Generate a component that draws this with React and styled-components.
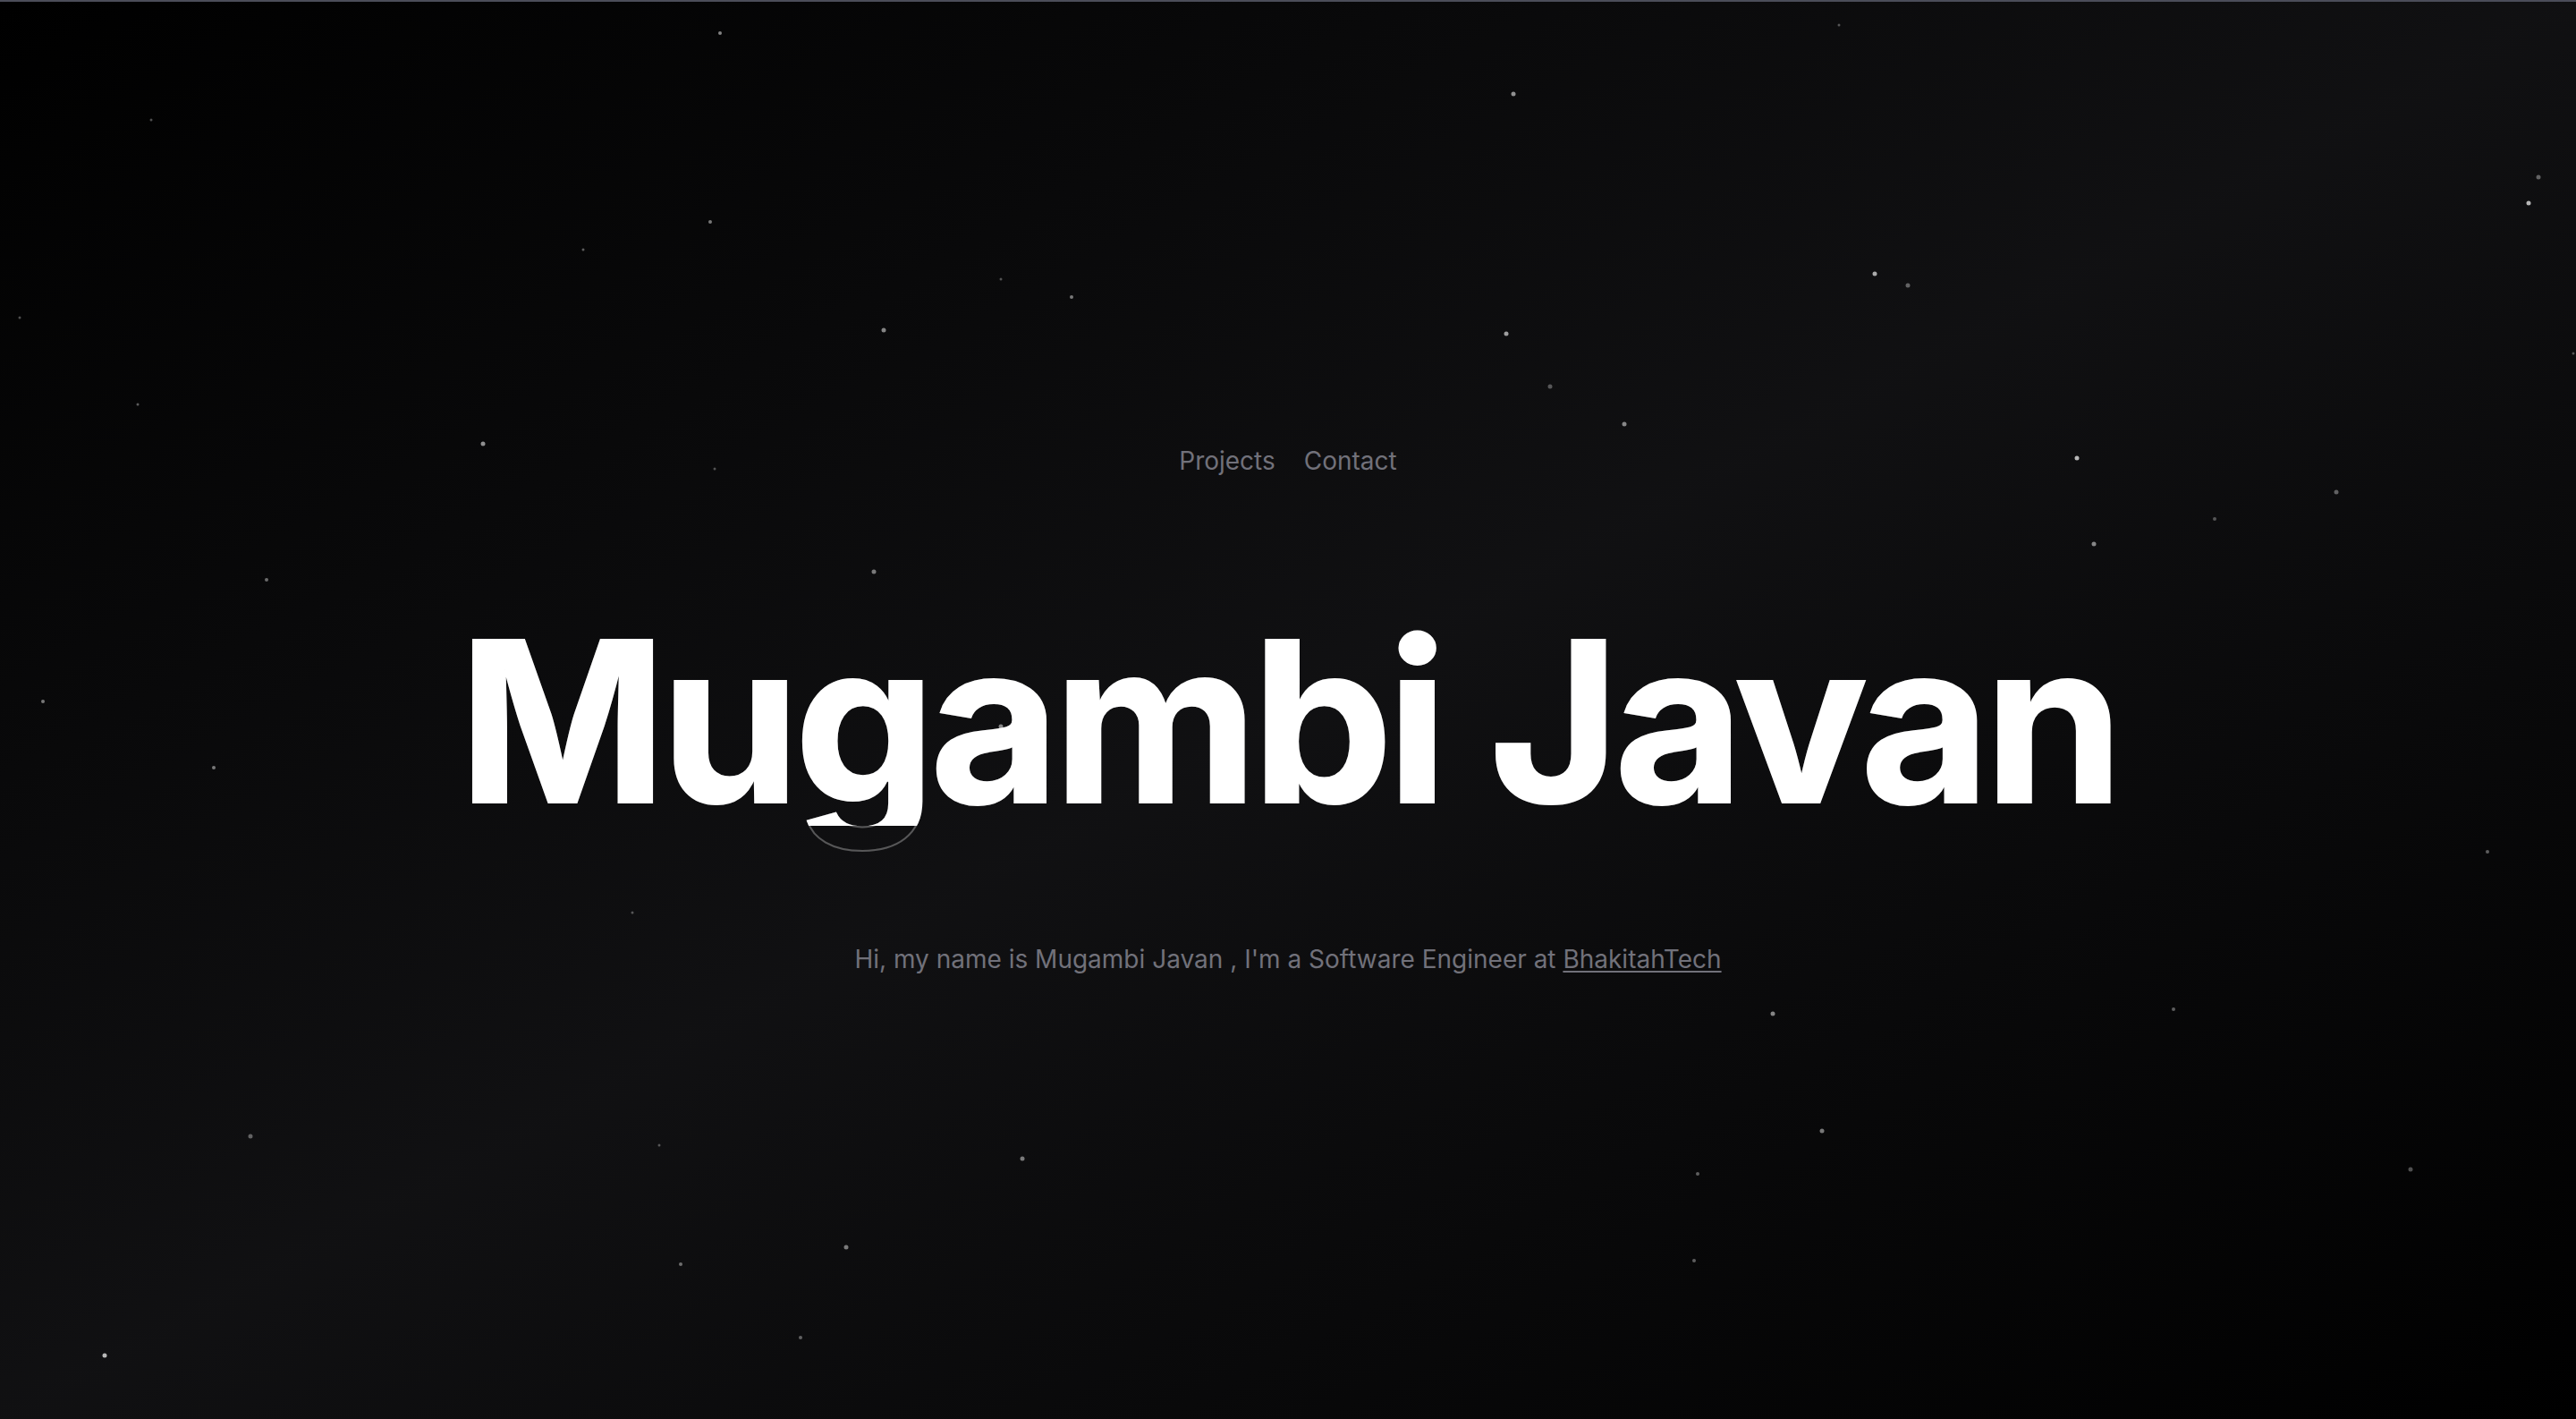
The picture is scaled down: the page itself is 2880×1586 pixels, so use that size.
import React from "react";
import styled, { createGlobalStyle } from "styled-components";

const GlobalStyle = createGlobalStyle`
  html, body {
    margin: 0;
    padding: 0;
    background: #000;
  }
  body {
    font-family: Inter, "Noto Sans", sans-serif;
    -webkit-font-smoothing: antialiased;
  }
`;

const Page = styled.main`
  position: relative;
  width: 100vw;
  height: 100vh;
  min-height: 1586px;
  overflow: hidden;
  background: linear-gradient(to top left, #000 0%, rgba(82, 82, 91, 0.2) 50%, #000 100%), #000;
  display: flex;
  flex-direction: column;
`;

const TopLine = styled.div`
  height: 2px;
  background: #4b4d59;
  flex: none;
  position: relative;
  z-index: 2;
`;

const Starfield = styled.svg`
  position: absolute;
  inset: 0;
  width: 100%;
  height: 100%;
  pointer-events: none;
  z-index: 0;
`;

const Content = styled.div`
  position: relative;
  z-index: 1;
  display: flex;
  flex-direction: column;
  align-items: center;
  padding-top: 493px;
`;

const Nav = styled.nav`
  display: flex;
  align-items: center;
  justify-content: center;
  gap: 32px;
`;

const NavLink = styled.a`
  font-family: Inter, sans-serif;
  font-size: 28px;
  line-height: 40px;
  color: #71717a;
  text-decoration: none;
  cursor: pointer;
`;

const Title = styled.h1`
  margin: 146px 0 0;
  font-family: Inter, sans-serif;
  font-weight: 700;
  font-size: 250px;
  line-height: 1;
  letter-spacing: -0.026em;
  white-space: nowrap;
  color: transparent;
  background: linear-gradient(to bottom, #fff 0, #fff 242px, transparent 242px);
  -webkit-background-clip: text;
  background-clip: text;
  -webkit-text-stroke: 2px rgba(255, 255, 255, 0.3);
`;

const Tagline = styled.h2`
  margin: 121px 0 0;
  font-family: Inter, sans-serif;
  font-weight: 400;
  font-size: 28px;
  line-height: 40px;
  color: #71717a;
  text-align: center;
`;

const Company = styled.a`
  color: #71717a;
  text-decoration: underline;
  text-underline-offset: 3px;
  text-decoration-thickness: 2px;
`;

const stars = [
  [805, 37, 2, 0.5], [1692, 105, 2.5, 0.55], [2838, 198, 2.5, 0.35], [2827, 227, 2.5, 0.7],
  [169, 134, 1.5, 0.3], [794, 248, 2, 0.45], [652, 279, 1.5, 0.35], [2096, 306, 2.5, 0.65],
  [2133, 319, 2.5, 0.35], [1119, 312, 1.5, 0.3], [1198, 332, 2, 0.45], [988, 369, 2.5, 0.5],
  [1684, 373, 2.5, 0.6], [1733, 432, 2.5, 0.3], [154, 452, 1.5, 0.35], [1816, 474, 2.5, 0.5],
  [540, 496, 2.5, 0.55], [799, 524, 1.5, 0.3], [2322, 512, 2.5, 0.7], [2612, 550, 2.5, 0.35],
  [2476, 580, 2, 0.3], [2341, 608, 2.5, 0.5], [977, 639, 2.5, 0.45], [298, 648, 2, 0.4],
  [48, 784, 2, 0.45], [1119, 812, 2.5, 0.5], [239, 858, 2, 0.45], [2781, 952, 2, 0.35],
  [707, 1020, 1.5, 0.3], [1982, 1133, 2.5, 0.5], [2430, 1128, 2, 0.35], [2037, 1264, 2.5, 0.45],
  [280, 1270, 2.5, 0.35], [1143, 1295, 2.5, 0.45], [1898, 1312, 2, 0.35], [2695, 1307, 2.5, 0.3],
  [737, 1280, 1.5, 0.3], [946, 1394, 2.5, 0.45], [761, 1413, 2, 0.4], [1894, 1409, 2, 0.35],
  [117, 1515, 2.5, 0.7], [895, 1495, 2, 0.35], [2056, 28, 1.5, 0.3], [22, 355, 1.5, 0.3],
  [2877, 395, 1.5, 0.3],
];

export default function App() {
  return (
    <>
      <GlobalStyle />
      <Page>
        <TopLine />
        <Starfield viewBox="0 0 2880 1586" preserveAspectRatio="none" aria-hidden="true">
          {stars.map(([x, y, r, o], i) => (
            <circle key={i} cx={x} cy={y} r={r} fill="#ffffff" fillOpacity={o} />
          ))}
        </Starfield>
        <Content>
          <Nav>
            <NavLink href="#projects">Projects</NavLink>
            <NavLink href="#contact">Contact</NavLink>
          </Nav>
          <Title>Mugambi Javan</Title>
          <Tagline>
            Hi, my name is Mugambi Javan , I'm a Software Engineer at{" "}
            <Company href="#bhakitahtech">BhakitahTech</Company>
          </Tagline>
        </Content>
      </Page>
    </>
  );
}
